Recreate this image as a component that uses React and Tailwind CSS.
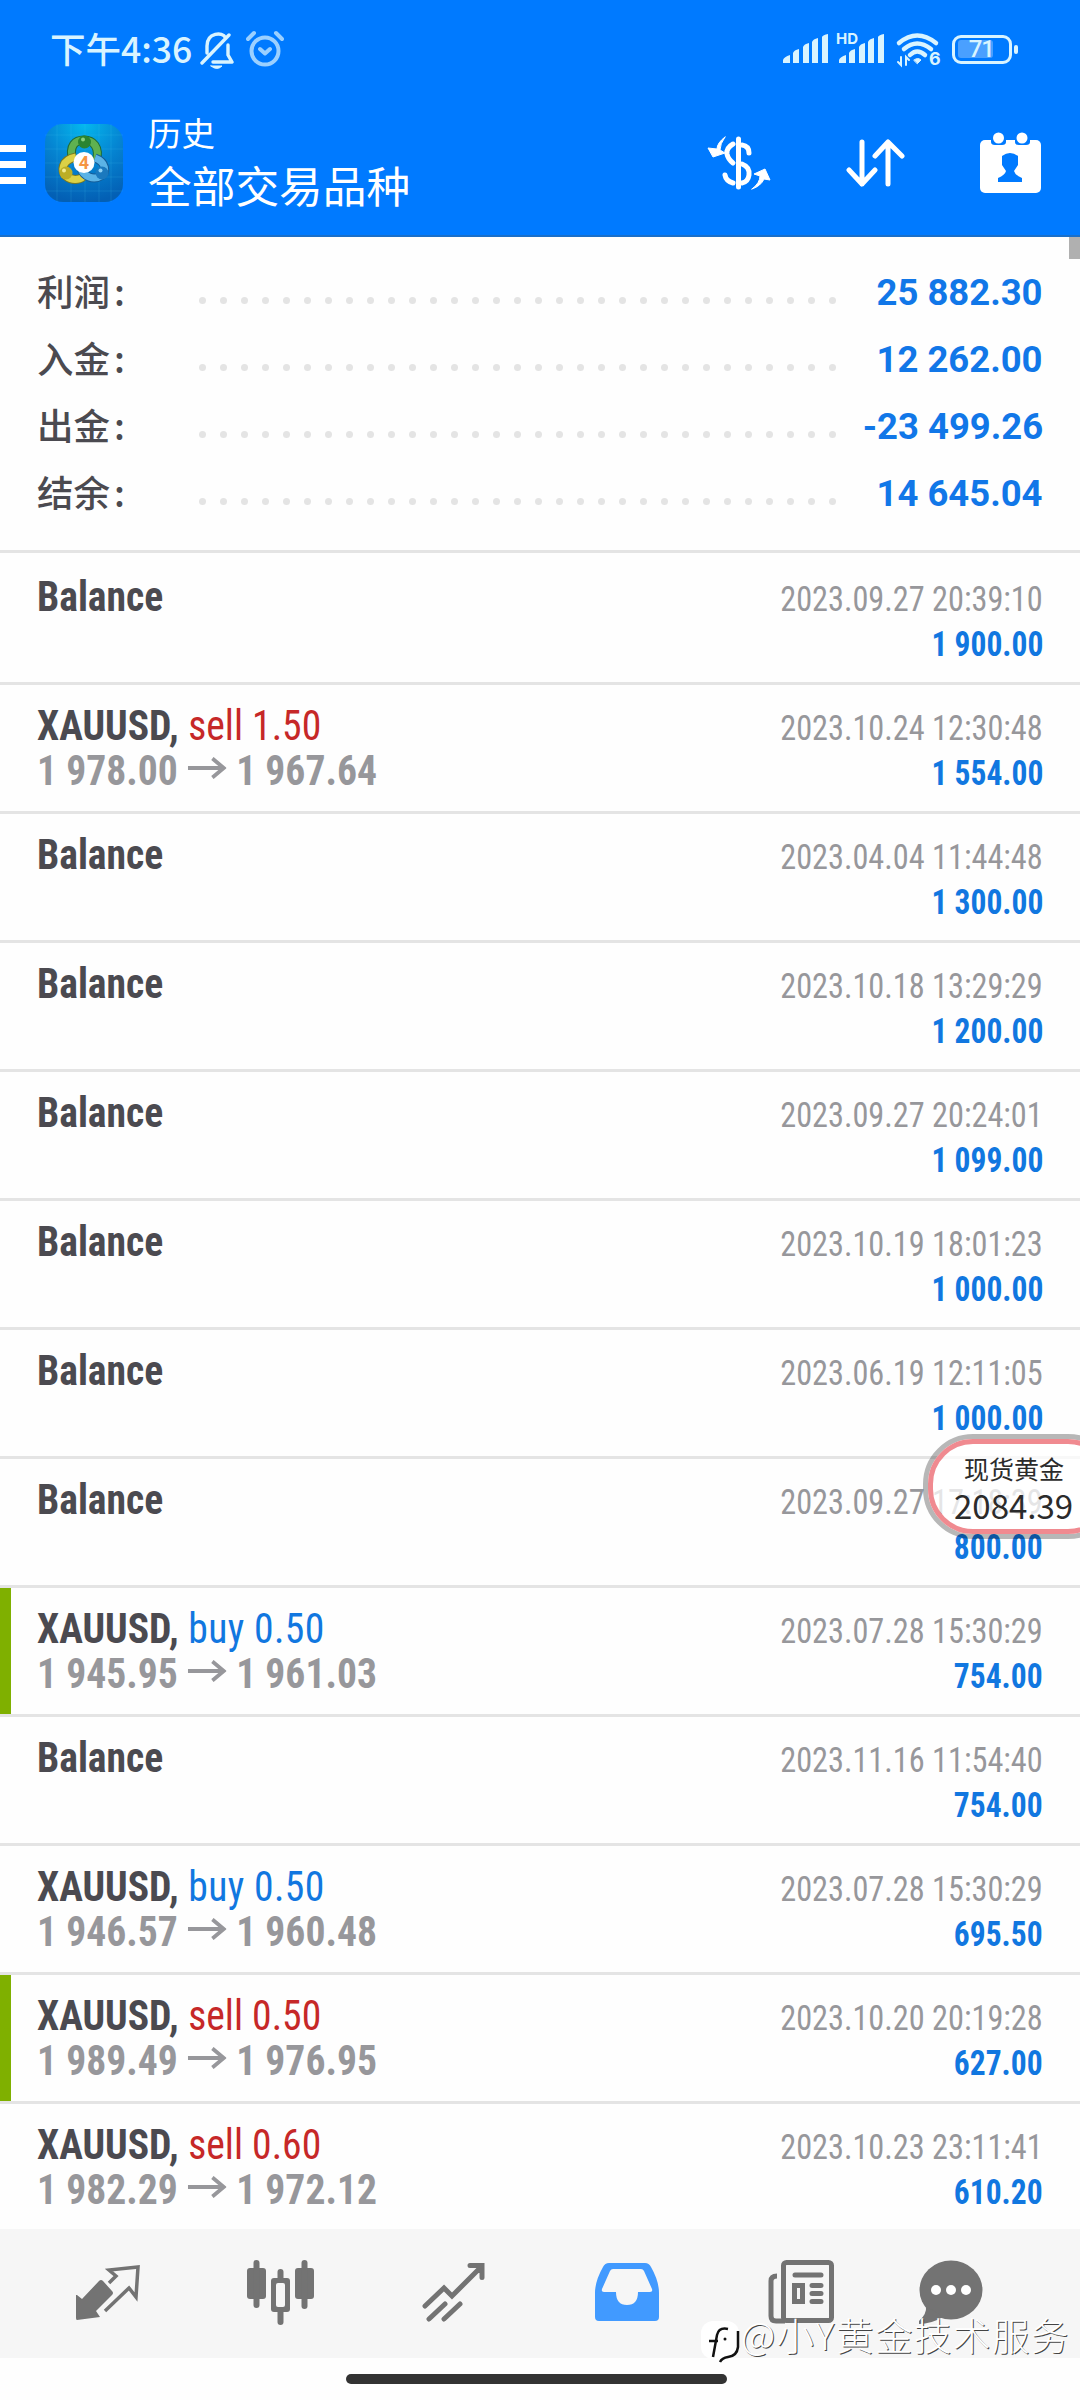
const HEADER_ICON = 'shrink-0 fill-none stroke-white'

const summary = [
  { label: '利润', value: '25 882.30' },
  { label: '入金', value: '12 262.00' },
  { label: '出金', value: '-23 499.26' },
  { label: '结余', value: '14 645.04' },
]

const deals = [
  { time: '2023.09.27 20:39:10', amount: '1 900.00' },
  { side: 'sell', lots: '1.50', open: '1 978.00', close: '1 967.64', time: '2023.10.24 12:30:48', amount: '1 554.00' },
  { time: '2023.04.04 11:44:48', amount: '1 300.00' },
  { time: '2023.10.18 13:29:29', amount: '1 200.00' },
  { time: '2023.09.27 20:24:01', amount: '1 099.00' },
  { time: '2023.10.19 18:01:23', amount: '1 000.00' },
  { time: '2023.06.19 12:11:05', amount: '1 000.00' },
  { time: '2023.09.27 17:18:39', amount: '800.00' },
  { side: 'buy', lots: '0.50', open: '1 945.95', close: '1 961.03', time: '2023.07.28 15:30:29', amount: '754.00', marked: true },
  { time: '2023.11.16 11:54:40', amount: '754.00' },
  { side: 'buy', lots: '0.50', open: '1 946.57', close: '1 960.48', time: '2023.07.28 15:30:29', amount: '695.50' },
  { side: 'sell', lots: '0.50', open: '1 989.49', close: '1 976.95', time: '2023.10.20 20:19:28', amount: '627.00', marked: true },
  { side: 'sell', lots: '0.60', open: '1 982.29', close: '1 972.12', time: '2023.10.23 23:11:41', amount: '610.20' },
]

const SignalBars = () => (
  <svg width="45" height="30" viewBox="0 0 45 30" className="fill-[#d9f4ff]">
    <path d="M0 29v-3q1-3 7-5v8zM10 29V19q1-3 6-4v14zM20 29V13q1-3 6-4v20zM29 29V8q1-3 6-4v25zM39 29V3q1-2 6-3v29z" />
  </svg>
)

const StatusBar = () => (
  <div className="flex h-[98px] items-center pl-[50px] pr-[62px] text-[#d9f4ff]">
    <span className="-mt-[3px] text-[35.500px] leading-none font-medium">下午4:36</span>
    <svg width="34" height="38" viewBox="0 0 34 38" className="ml-[8px] mt-[3px] fill-none stroke-[#d9f4ff]" strokeWidth="3.4" strokeLinecap="round" strokeLinejoin="round">
      <path d="M2 31 29 3M7 21v-7c0-14 16-14 18-9M28 13v10l4 7H13" />
      <path d="M11 34h11q-5 5-11 0z" className="fill-[#d9f4ff]" strokeWidth="1" />
    </svg>
    <svg width="38" height="38" viewBox="0 0 38 38" className="ml-[12px] fill-none stroke-[#9bd0ff]" strokeWidth="4" strokeLinecap="round" strokeLinejoin="round">
      <circle cx="19" cy="21" r="13.500" />
      <path d="m14 19 5 4.500 5-4.500M2 9l6-6M36 9l-6-6" />
    </svg>
    <div className="ml-auto flex items-center">
      <SignalBars />
      <div className="relative ml-[11px]">
        <SignalBars />
        <span className="absolute -top-[2px] -left-[3px] bg-[#007aff] pr-px font-['Inter'] text-[15px] leading-[13px] font-bold">HD</span>
      </div>
      <svg width="44" height="36" viewBox="0 0 44 36" className="ml-[12px] overflow-visible fill-none stroke-[#d9f4ff]" strokeWidth="4.500" strokeLinecap="round">
        <path d="M3 12q18-15 37 0M8 18q13-11 27 0M14 24q7-7 15 0" />
        <path d="M18 29q4-3 7 0l-3.500 3.500z" className="fill-[#d9f4ff]" strokeWidth="1" />
        <path d="M5 26v8l-3-3M10 34v-8l3 3" strokeWidth="2" />
        <text x="33" y="34" fontSize="18" fontWeight="700" stroke="none" className="fill-[#d9f4ff] font-['Inter']">6</text>
      </svg>
      <div className="ml-[12px] flex h-[29px] w-[60px] items-center rounded-[9px] border-[3px] border-[#d9f4ff] pl-[3px]">
        <div className="flex h-[18px] w-[35px] items-center justify-end rounded-[3px] bg-[#4aa0ff] font-['Roboto'] text-[24px] leading-none font-medium">
          <span className="-mr-[1px] tracking-[-1px]">71</span>
        </div>
      </div>
      <div className="ml-[2px] h-[9px] w-[4px] rounded-full bg-[#d9f4ff]" />
    </div>
  </div>
)

const AppLogo = () => (
  <svg width="78" height="78" viewBox="0 0 78 78" className="ml-[19px] shrink-0">
    <defs>
      <radialGradient id="bg" cx="0.5" cy="0" r="1">
        <stop offset="0" stopColor="#04b8ee" />
        <stop offset="0.5" stopColor="#0585d2" />
        <stop offset="1" stopColor="#035fb4" />
      </radialGradient>
    </defs>
    <rect width="78" height="78" rx="18" fill="url(#bg)" />
    <path d="M0 11h78M0 25h78M0 39h78M0 53h78M0 67h78M12 0v78M26 0v78M40 0v78M54 0v78M66 0v78" stroke="#4cc4f4" strokeOpacity=".16" />
    <g fill="none">
      <path d="M28 37c-5-16 3-21 11-21s17 6 12 23" stroke="#1f6b35" strokeWidth="9" />
      <path d="M28 37c-5-16 3-21 11-21s17 6 12 23" stroke="#5fb150" strokeWidth="7" />
      <path d="M31 33c-15 3-15 14-10 19 6 5 13 4 17 1" stroke="#7a7820" strokeWidth="9" />
      <path d="M31 33c-15 3-15 14-10 19 6 5 13 4 17 1" stroke="#dbd146" strokeWidth="7" />
      <path d="M50 34c11 4 12 14 6 18-8 5-17 0-20-7" stroke="#145c98" strokeWidth="9" />
      <path d="M50 34c11 4 12 14 6 18-8 5-17 0-20-7" stroke="#5bb3e6" strokeWidth="7" />
    </g>
    <circle cx="39.500" cy="18" r="6.500" fill="#2a8430" />
    <circle cx="38" cy="15.500" r="2" fill="#8bd07e" />
    <circle cx="21" cy="49" r="6.500" fill="#bcae25" />
    <circle cx="19" cy="46.500" r="2" fill="#f3ec92" />
    <circle cx="57" cy="49" r="6.500" fill="#1b79be" />
    <circle cx="55.500" cy="46.500" r="2" fill="#90d2f5" />
    <circle cx="39" cy="38.500" r="10.500" fill="#fff" />
    <text x="39" y="45" fontSize="18" fontWeight="700" textAnchor="middle" fill="#f59543" className="font-['Roboto']">4</text>
  </svg>
)

const Header = () => (
  <header className="h-[237px] shrink-0 border-b-2 border-[#1a6fc9] bg-[#007aff] text-white">
    <StatusBar />
    <div className="flex h-[130px] items-center">
      <div className="mt-[3px] flex w-[26px] flex-col gap-[9px]">
        <div className="h-[7px] bg-white" />
        <div className="h-[7px] bg-white" />
        <div className="h-[7px] bg-white" />
      </div>
      <AppLogo />
      <div className="-mt-[5px] ml-[25px] flex flex-col gap-[8px]">
        <span className="text-[33.500px] leading-[38px]">历史</span>
        <span className="text-[43.700px] leading-[50px]">全部交易品种</span>
      </div>
      <svg width="64" height="54" viewBox="0 0 64 54" className={`${HEADER_ICON} ml-auto`} strokeWidth="5" strokeLinecap="round">
        <path d="M31.500 3v48" />
        <path d="M26 8q-7 4-6 10 1 5 6 9M35 9q7 1 7 8M35 28q8 3 7 11-1 7-7 8M26 47q-7-2-8-8" />
        <path d="M18 1Q10 7 10 13L1 12l5 9 12-4-5-3q0-6 5-13zM45 53q8-6 8-13l-6-2 11-5 5 11-6-1q-3 7-12 10z" className="fill-white" strokeWidth="1" />
      </svg>
      <svg width="60" height="50" viewBox="0 0 60 50" className={`${HEADER_ICON} ml-[74px]`} strokeWidth="5" strokeLinecap="round" strokeLinejoin="round">
        <path d="M17 4v42M4 32l13 14 13-14M43 46V4M30 18 43 4l14 14" />
      </svg>
      <svg width="61" height="62" viewBox="0 0 61 62" className="-mt-[1px] mr-[39px] ml-[75px] shrink-0">
        <rect y="8" width="61" height="53" rx="5" fill="#fff" />
        <path d="M11 6h15v4q0 3-4 3h-7q-4 0-4-3zM35 6h15v4q0 3-4 3h-7q-4 0-4-3z" fill="#007aff" />
        <circle cx="18.500" cy="6" r="5.500" fill="#fff" />
        <circle cx="42" cy="6" r="5.500" fill="#fff" />
        <path d="M22 24q8-6 16 0v9l-4 6q1 4 8 7v4H18v-4q7-3 8-7l-4-6z" fill="#007aff" />
      </svg>
    </div>
  </header>
)

const SummaryRow = ({ label, value }) => (
  <div className="flex h-[67px] items-center">
    <div className="-mt-[3px] flex w-[162px] text-[36.500px] leading-none font-medium text-[#4b4a50]">
      {label}
      <span className="ml-[4px]">:</span>
    </div>
    <div className="mt-[15px] flex w-[637px] justify-between">
      {Array.from({ length: 31 }, (_, i) => (
        <span key={i} className="size-[7px] rounded-full bg-[#e4e4e4]" />
      ))}
    </div>
    <span className="ml-auto origin-right scale-x-[0.985] font-['Roboto'] text-[37px] leading-none font-bold text-[#1177e8]">{value}</span>
  </div>
)

const Arrow = () => (
  <svg width="41" height="22" viewBox="0 0 41 22" className="-mt-[5px] mr-[10px] ml-[11px] fill-none stroke-[#97979b]" strokeWidth="4">
    <path d="M0 11h38M26 1.500 38 11 26 20.500" />
  </svg>
)

const DealRow = ({ deal }) => (
  <div className="relative flex h-[129px] shrink-0 justify-between border-b-[3px] border-[#e4e4e4] px-[37px] pt-[18px] font-['Roboto_Condensed','Roboto'] font-stretch-condensed">
    {deal.marked && <div className="absolute inset-y-0 left-0 w-[11px] bg-[#7fb000]" />}
    <div className="w-[400px] origin-left scale-x-[0.943]">
      <div className="flex h-[45px] items-center text-[42px] leading-[45px] font-bold text-[#4b4a50]">
        {deal.side ? 'XAUUSD,' : 'Balance'}
        {deal.side && (
          <span className={deal.side === 'sell' ? 'ml-[10px] font-normal text-[#c62828]' : 'ml-[10px] font-normal tracking-[0.4px] text-[#1177e0]'}>
            {deal.side} {deal.lots}
          </span>
        )}
      </div>
      {deal.side && (
        <div className="flex h-[45px] items-center text-[42px] leading-[45px] font-bold text-[#97979b]">
          {deal.open}
          <Arrow />
          {deal.close}
        </div>
      )}
    </div>
    <div className="flex flex-col items-end pt-px">
      <span className="h-[45px] origin-right scale-x-[0.922] text-[35px] leading-[50px] text-[#97979b]">{deal.time}</span>
      <span className="h-[45px] origin-right scale-x-[0.9] text-[35px] leading-[50px] font-bold text-[#1177e0]">{deal.amount}</span>
    </div>
  </div>
)

const PriceBubble = () => (
  <div className="absolute top-[1434px] left-[923px] h-[105px] w-[195px] rounded-[50px] border-[5px] border-black/28">
    <div className="flex h-full flex-col rounded-[45px] border-[5px] border-[#f08a90] bg-white/75 bg-clip-padding text-[#2b2b2b]">
      <span className="mt-[11px] ml-[31px] text-[25px] leading-[26px]">现货黄金</span>
      <span className="mt-[7px] ml-[21px] text-[33px] leading-[34px]">2084.39</span>
    </div>
  </div>
)

const TabBar = () => (
  <nav className="h-[129px] shrink-0 bg-[#f6f6f6] pt-[31px]">
    <div className="flex items-start pl-[75px]">
      <svg width="66" height="62" viewBox="0 0 66 62" className="mt-[3px]">
        <path d="M2 32l5 4L24 18q2-2 4 0l9 10q2 2 0 4L21 48l4 6-23 3q-1 0-1-2V32z" fill="#737373" />
        <path d="M34 19l7-7-7-6 29-3-2 30-7-9-24 23" transform="translate(0 1)" className="fill-none stroke-[#737373]" strokeWidth="3.500" />
      </svg>
      <svg width="67" height="66" viewBox="0 0 67 66" className="ml-[106px]" fill="#737373">
        <rect y="8" width="19" height="31" rx="3" />
        <rect x="6.500" width="6" height="48" rx="3" />
        <rect x="48" y="8" width="19" height="31" rx="3" />
        <rect x="54.500" width="6" height="49" rx="3" />
        <rect x="30.500" y="9" width="6" height="56" rx="3" />
        <rect x="24" y="18" width="19" height="34" rx="3" />
        <rect x="29" y="23" width="9" height="24" rx="2" fill="#f6f6f6" />
      </svg>
      <svg width="64" height="62" viewBox="0 0 64 62" className="mt-[2px] ml-[108px] fill-none stroke-[#737373]" strokeWidth="5" strokeLinecap="round">
        <path d="m3 44 19-18 8 8L59 5M48 3.500h12v12M7 57l16-15M22 57l16-15" />
      </svg>
      <svg width="64" height="60" viewBox="0 0 64 60" className="mt-[3px] ml-[109px]">
        <path fillRule="evenodd" d="M14 0h36q4 0 6 4 8 14 8 26v24q0 4-4 4H4q-4 0-4-4V30Q0 18 8 4q2-4 6-4zM18 6q-2 0-3 2L7 26q-1 3 2 3h12q0 13 11 13t11-13h12q3 0 2-3L49 8q-1-2-3-2z" fill="#419aff" />
      </svg>
      <svg width="66" height="64" viewBox="0 0 66 64" className="ml-[109px] fill-none stroke-[#737373]" strokeWidth="5">
        <rect x="15.500" y="2.500" width="48" height="58" rx="3" />
        <path d="M9 16q-6 0-6 5v35q0 5 5 5h9" />
        <path d="M27 15h26M44 25.500h9M44 33.500h9M44 41.500h9" strokeLinecap="round" />
        <rect x="26.500" y="25.500" width="8" height="16" />
      </svg>
      <svg width="64" height="66" viewBox="0 0 64 66" className="ml-[85px]">
        <ellipse cx="32" cy="30" rx="31.500" ry="29.500" fill="#737373" />
        <path d="M7 46q1 8-7 15v3q12 0 24-7z" fill="#737373" />
        <circle cx="17" cy="30" r="5" fill="#fff" />
        <circle cx="32" cy="30" r="5" fill="#fff" />
        <circle cx="47" cy="30" r="5" fill="#fff" />
      </svg>
    </div>
  </nav>
)

const Watermark = () => (
  <div className="absolute top-[2313px] left-[701px] flex text-white">
    <svg width="40" height="52" viewBox="0 0 40 52" className="mt-[6px]">
      <rect y="2" width="38" height="38" rx="12" fill="#fff" />
      <path d="M27 10q-9-2-11 6l-4 22M8 22h9" fill="none" stroke="#111" strokeWidth="2.500" />
      <path d="M37 12v16q-1 9-10 10-6 1-8 5" fill="none" stroke="#111" strokeWidth="2.500" />
      <circle cx="24" cy="20" r="1.500" fill="#111" />
    </svg>
    <span className="text-[37.500px] leading-[42px] font-light tracking-[1.500px] whitespace-nowrap [text-shadow:1px_1px_0.500px_#444]">@小Y黄金技术服务</span>
  </div>
)

export default function App() {
  return (
    <div className="relative flex h-[2400px] w-[1080px] flex-col overflow-hidden bg-[#fefefe] font-['Noto_Sans_CJK_SC',sans-serif]">
      <Header />
      <section className="relative h-[316px] shrink-0 border-b-[3px] border-[#e4e4e4] px-[37px] pt-[22px]">
        {summary.map((row) => (
          <SummaryRow key={row.label} {...row} />
        ))}
        <div className="absolute top-0 right-0 h-[22px] w-[11px] bg-[#b0b0b0]" />
      </section>
      <main className="flex h-[1676px] shrink-0 flex-col overflow-hidden pt-[3px]">
        {deals.map((deal, i) => (
          <DealRow key={i} deal={deal} />
        ))}
      </main>
      <TabBar />
      <div className="mt-[16px] ml-[346px] h-[10px] w-[381px] rounded-full bg-[#333]" />
      <PriceBubble />
      <Watermark />
    </div>
  )
}
